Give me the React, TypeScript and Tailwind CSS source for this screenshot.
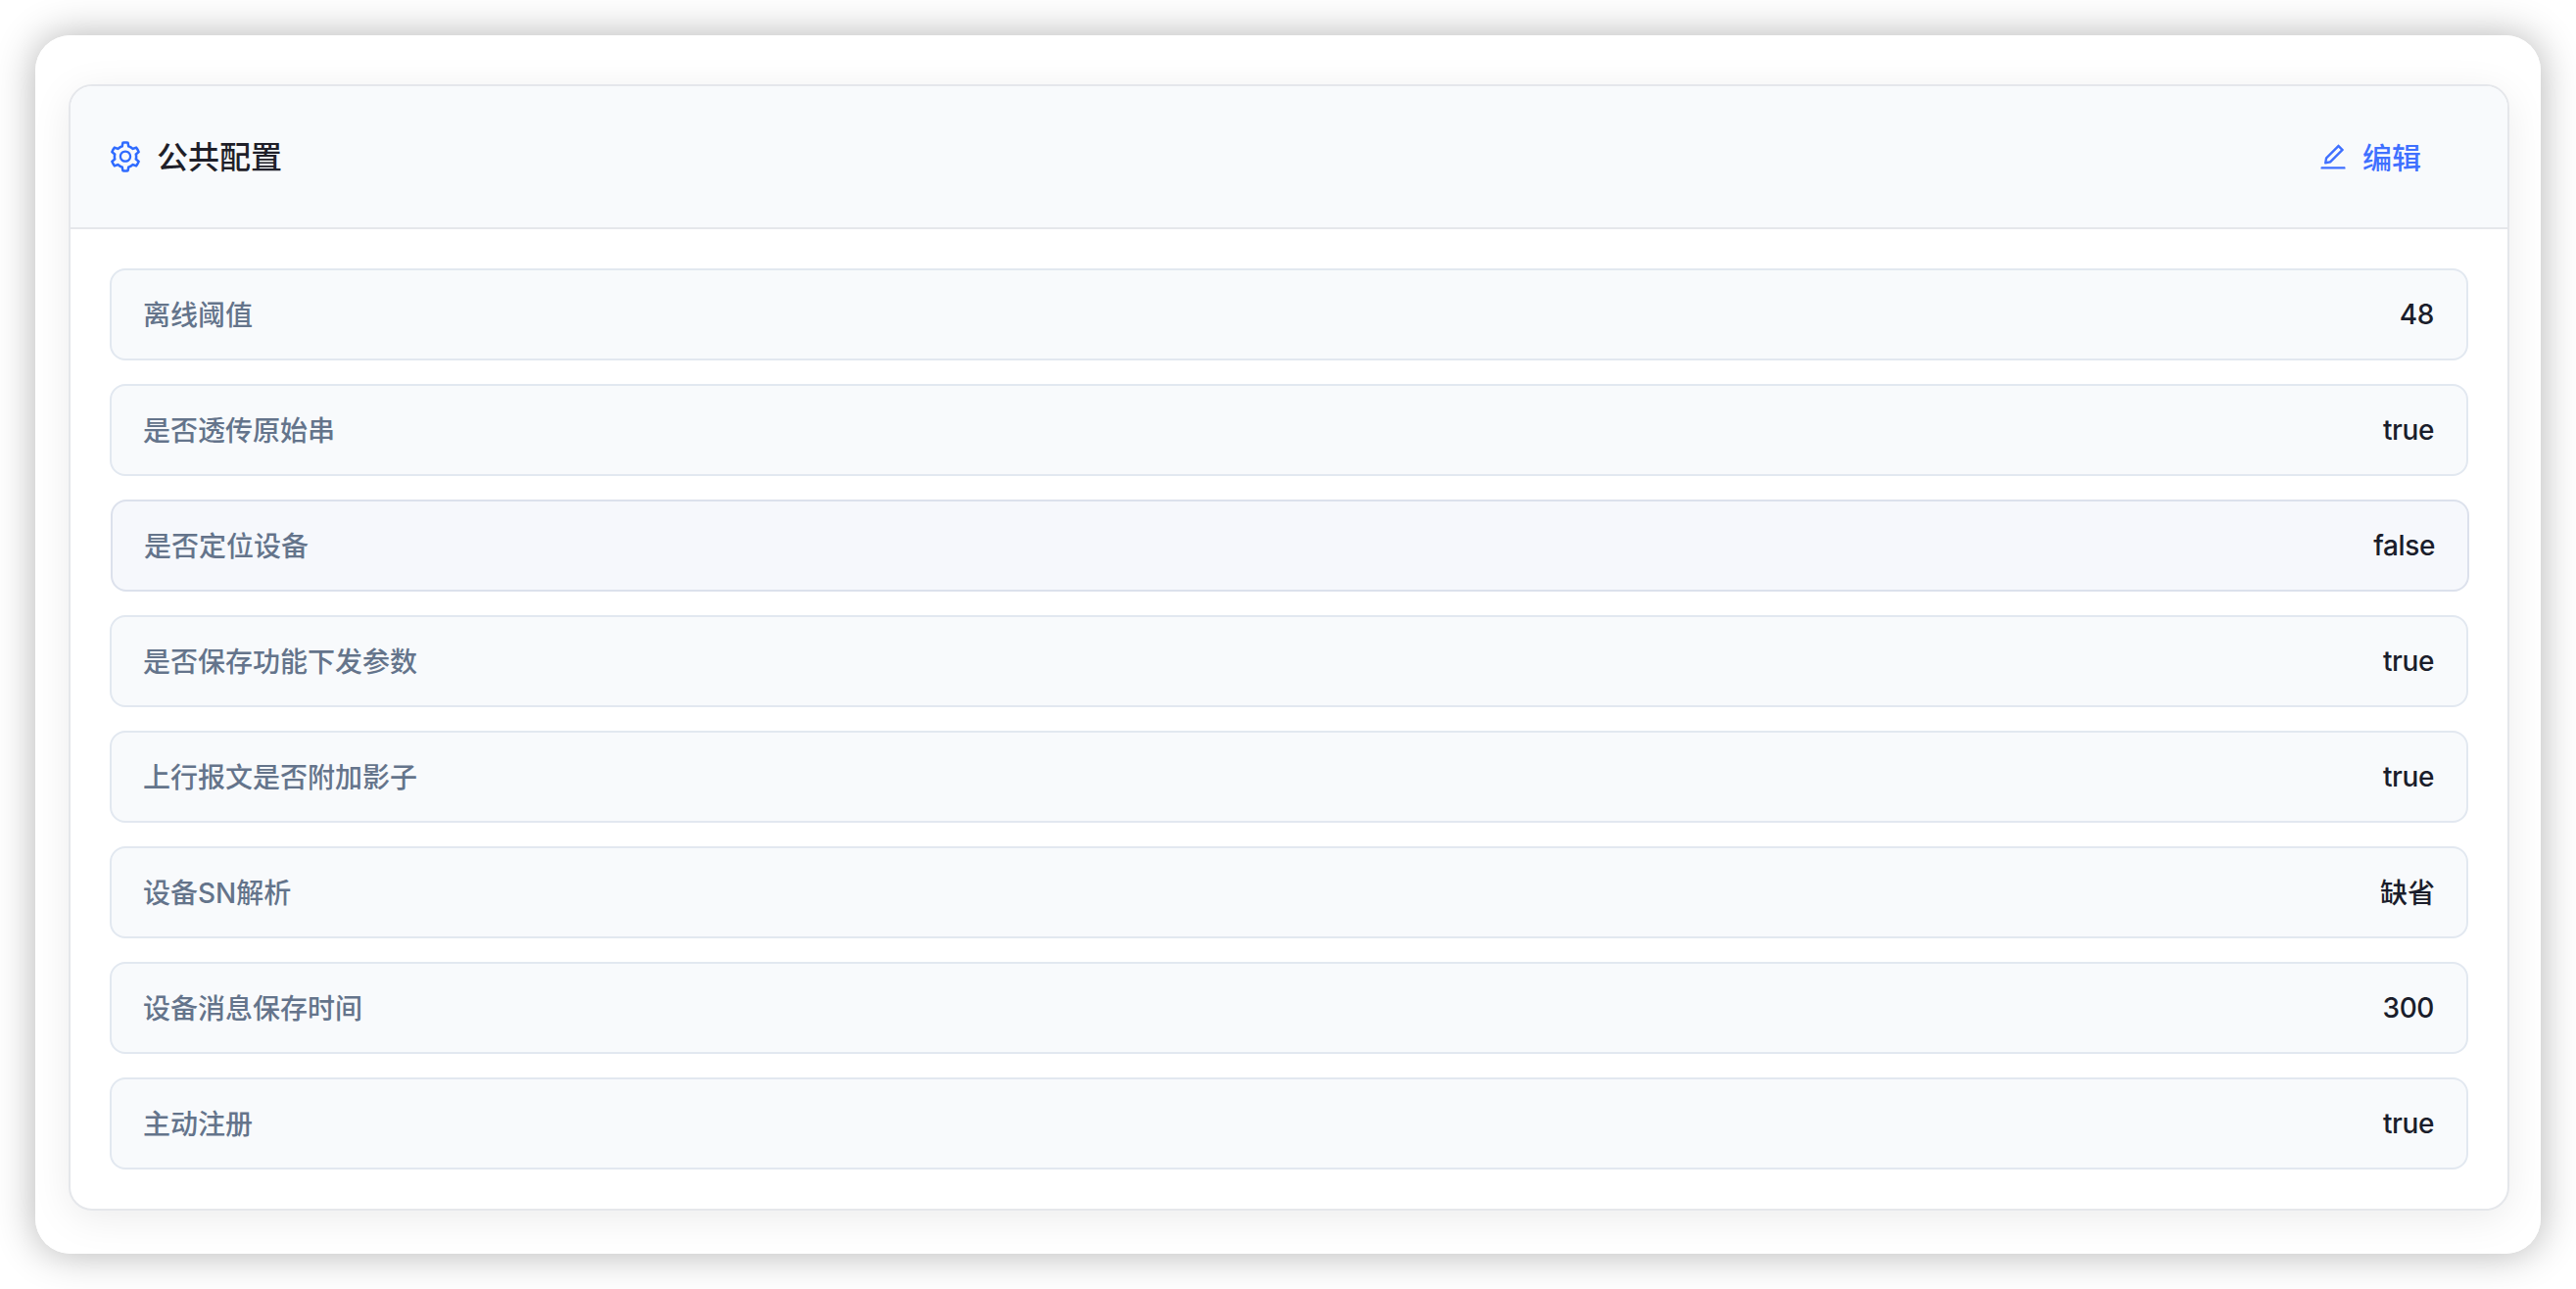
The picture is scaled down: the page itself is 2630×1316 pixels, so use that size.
import { AiOutlineEdit, AiOutlineSetting } from "react-icons/ai";
import { clsx } from "clsx";

interface ConfigItem {
  label: string;
  value: string;
  active?: boolean;
}

const items: ConfigItem[] = [
  { label: "离线阈值", value: "48" },
  { label: "是否透传原始串", value: "true" },
  { label: "是否定位设备", value: "false", active: true },
  { label: "是否保存功能下发参数", value: "true" },
  { label: "上行报文是否附加影子", value: "true" },
  { label: "设备SN解析", value: "缺省" },
  { label: "设备消息保存时间", value: "300" },
  { label: "主动注册", value: "true" },
];

function ConfigRow({ label, value, active }: ConfigItem) {
  // latin values sit slightly higher and tighter than chinese ones
  const isLatin = /^[\w.-]+$/.test(value);

  return (
    <div
      className={clsx(
        "flex h-[94px] items-center justify-between rounded-2xl border-2 px-8 pt-0.5 text-[28px] leading-none font-medium",
        active
          ? "translate-x-px border-[#dce1ec] bg-[#f6f8fc]"
          : "border-[#e2e8f0] bg-[#f8fafc]"
      )}
    >
      <span className="text-[#64748b]">{label}</span>
      <span className={clsx("text-[#1a1d2b]", isLatin && "mr-px pb-0.5 tracking-[-0.4px]")}>
        {value}
      </span>
    </div>
  );
}

export default function App() {
  return (
    <div className="h-[1316px] w-full overflow-hidden bg-white p-9 font-['Inter','Noto_Sans_CJK_SC',sans-serif]">
      <div className="h-[1244px] rounded-[36px] shadow-[0_0_40px_rgba(0,0,0,0.3)]">
        <div className="h-full overflow-hidden rounded-[36px] bg-white pt-[50px] pr-8 pl-[34px]">
          <section className="h-[1150px] overflow-hidden rounded-3xl border-2 border-[#e5e7eb] bg-white shadow-[0_8px_40px_rgba(0,0,0,0.08)]">
            <header className="flex h-[146px] items-center justify-between border-b-2 border-[#e5e7eb] bg-[#f8fafc] pr-[88px] pl-[38px]">
              <div className="flex items-center gap-3.5">
                <AiOutlineSetting className="size-9 text-[#2f6bff]" />
                <h2 className="pt-0.5 text-[32px] leading-none font-medium text-[#1f1f29]">公共配置</h2>
              </div>
              <button className="flex items-center gap-3.5 text-[#3f70ff]">
                <AiOutlineEdit className="size-8" />
                <span className="pt-px text-[30px] leading-none font-medium">编辑</span>
              </button>
            </header>

            <div className="flex flex-col gap-6 p-10">
              {items.map((item) => (
                <ConfigRow key={item.label} {...item} />
              ))}
            </div>
          </section>
        </div>
      </div>
    </div>
  );
}
